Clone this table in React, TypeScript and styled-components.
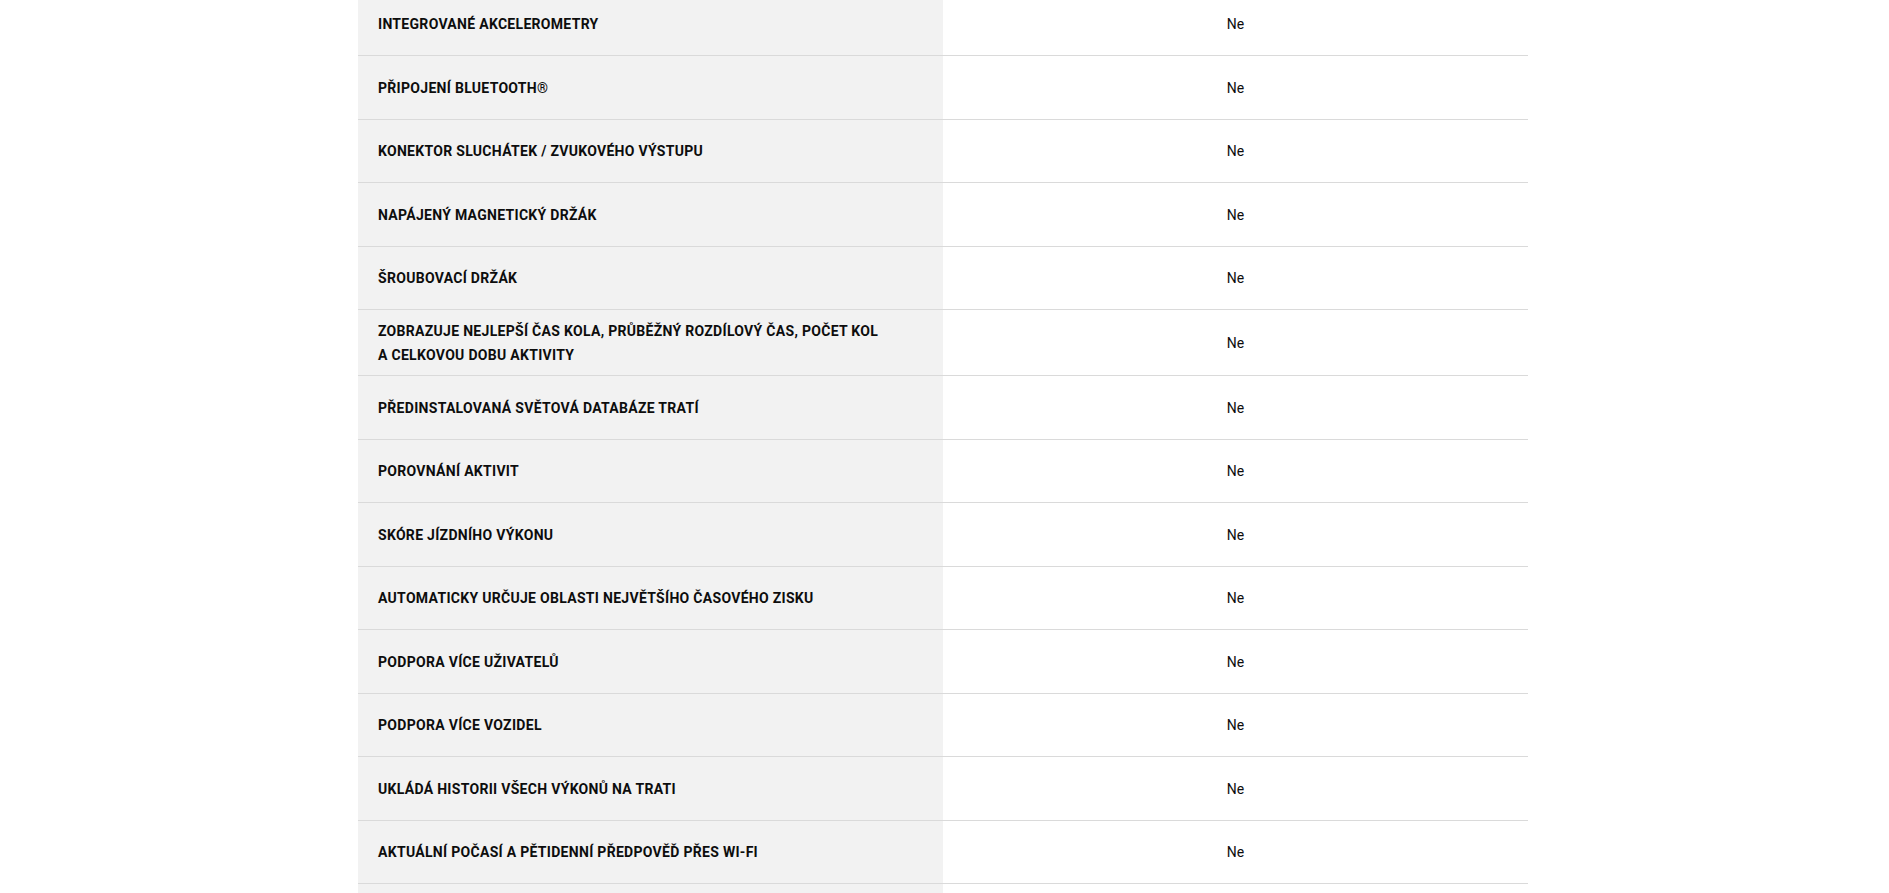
import React from 'react';
import styled, { createGlobalStyle } from 'styled-components';

const GlobalStyle = createGlobalStyle`
	html, body {
		margin: 0;
		padding: 0;
		background: #fff;
		overflow: hidden;
	}
	body {
		font-family: Roboto, 'Liberation Sans', Arial, sans-serif;
		color: #000;
	}
`;

const Specs = styled.div`
	width: 1170px;
	margin: -7.5px 0 0 358px;
`;

const Row = styled.div`
	display: grid;
	grid-template-columns: 585px 585px;
	border-bottom: 1px solid #dadada;
`;

const Label = styled.div`
	display: flex;
	align-items: center;
	box-sizing: border-box;
	min-height: 62.5px;
	padding: 9px 20px 8px;
	background: #f2f2f2;
	font-size: 14px;
	line-height: 24px;
	font-weight: 700;
	letter-spacing: 0.3px;
	text-transform: uppercase;
	color: #0d0d0d;
`;

const Value = styled.div`
	display: flex;
	align-items: center;
	justify-content: center;
	padding: 9px 20px 8px;
	font-size: 14px;
	line-height: 24px;
	font-weight: 400;
	color: #0d0d0d;
`;

const features: React.ReactNode[] = [
	'Integrované akcelerometry',
	'Připojení Bluetooth®',
	'Konektor sluchátek / zvukového výstupu',
	'Napájený magnetický držák',
	'Šroubovací držák',
	<>
		Zobrazuje nejlepší čas kola, průběžný rozdílový čas, počet kol
		<br />a celkovou dobu aktivity
	</>,
	'Předinstalovaná světová databáze tratí',
	'Porovnání aktivit',
	'Skóre jízdního výkonu',
	'Automaticky určuje oblasti největšího časového zisku',
	'Podpora více uživatelů',
	'Podpora více vozidel',
	'Ukládá historii všech výkonů na trati',
	'Aktuální počasí a pětidenní předpověď přes Wi-Fi',
	'',
];

const App: React.FunctionComponent = () => {
	return (
		<>
			<GlobalStyle />
			<Specs>
				{features.map((item, index) => (
					<Row key={index}>
						<Label>{item}</Label>
						<Value>{item !== '' ? 'Ne' : ''}</Value>
					</Row>
				))}
			</Specs>
		</>
	);
};

export default App;
